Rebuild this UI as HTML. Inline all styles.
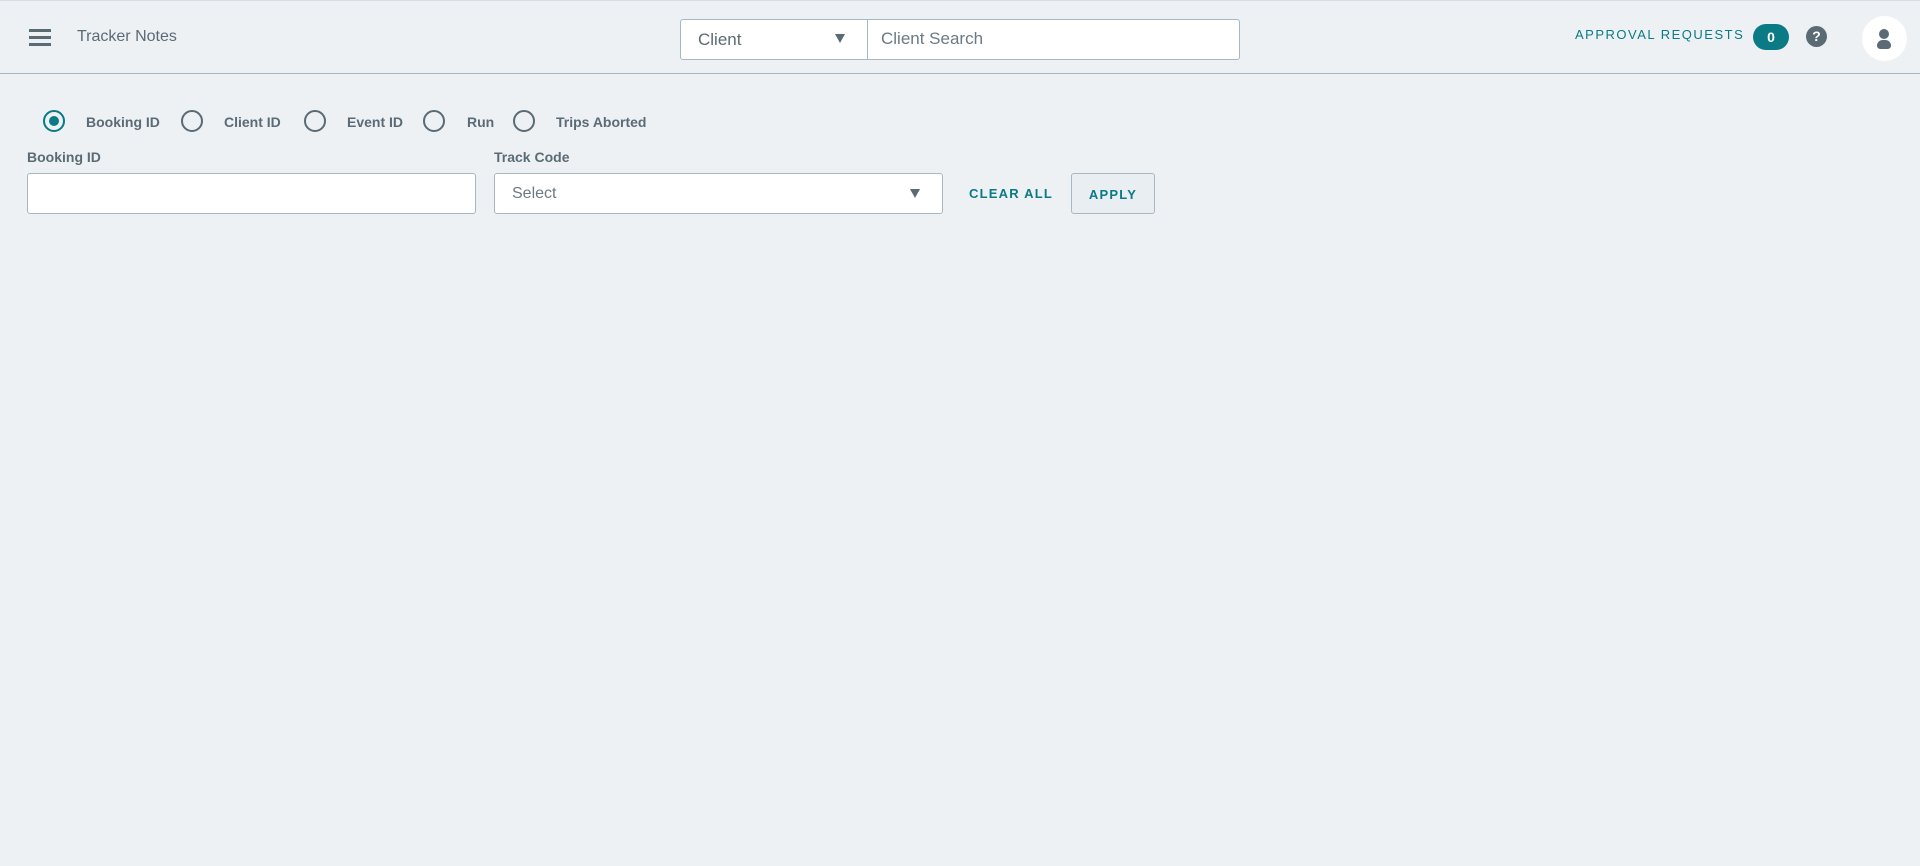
<!DOCTYPE html>
<html><head><meta charset="utf-8"><style>
*{box-sizing:border-box;margin:0;padding:0}
body{width:1920px;height:866px;background:#edf1f4;font-family:"Liberation Sans",sans-serif;color:#5b6b75;position:relative;overflow:hidden}
.a{position:absolute}
.hdr{left:0;top:0;width:1920px;height:74px;border-top:1px solid #d4dde3;border-bottom:1px solid #a8b8c3}
.box{background:#fff;border:1px solid #a8b8c3;border-radius:3px}
.rad{width:22px;height:22px;border:2px solid #5b6b75;border-radius:50%;top:110px}
.lbl{font-size:14px;font-weight:bold;top:114px}
.tri{width:0;height:0;border-left:5px solid transparent;border-right:5px solid transparent;border-top:9px solid #5b6b75}
</style></head><body>
<div class="a hdr"></div>
<div class="a" style="left:29px;top:29px;width:22px;height:3px;background:#5b6b75;box-shadow:0 7px 0 #5b6b75,0 14px 0 #5b6b75"></div>
<div class="a" style="left:77px;top:28px;font-size:16px">Tracker Notes</div>
<div class="a box" style="left:680px;top:19px;width:188px;height:41px;border-radius:3px 0 0 3px"></div>
<div class="a" style="left:698px;top:30px;font-size:17px">Client</div>
<div class="a tri" style="left:835px;top:34px"></div>
<div class="a box" style="left:867px;top:19px;width:373px;height:41px;border-radius:0 3px 3px 0"></div>
<div class="a" style="left:881px;top:29px;font-size:17px;color:#6b7a83">Client Search</div>
<div class="a" style="left:1575px;top:27px;font-size:13px;color:#0a7a84;letter-spacing:1.5px">APPROVAL REQUESTS</div>
<div class="a" style="left:1753px;top:24px;width:36px;height:26px;border-radius:13px;background:#0a7a84;color:#fff;font-size:14px;font-weight:bold;text-align:center;line-height:26px">0</div>
<div class="a" style="left:1806px;top:26px;width:21px;height:21px;border-radius:50%;background:#5b6b75;color:#fff;font-size:14px;font-weight:bold;text-align:center;line-height:21px">?</div>
<div class="a" style="left:1862px;top:16px;width:45px;height:45px;border-radius:50%;background:#fff"></div>
<div class="a" style="left:1879px;top:29px;width:10px;height:10px;border-radius:50%;background:#5b6b75"></div>
<div class="a" style="left:1877px;top:40px;width:14px;height:9px;border-radius:7px 7px 4px 4px;background:#5b6b75"></div>

<div class="a rad" style="left:43px;border-color:#0a7a84"><div style="width:10px;height:10px;border-radius:50%;background:#0a7a84;margin:4px"></div></div>
<div class="a lbl" style="left:86px">Booking ID</div>
<div class="a rad" style="left:181px"></div>
<div class="a lbl" style="left:224px">Client ID</div>
<div class="a rad" style="left:304px"></div>
<div class="a lbl" style="left:347px">Event ID</div>
<div class="a rad" style="left:423px"></div>
<div class="a lbl" style="left:467px">Run</div>
<div class="a rad" style="left:513px"></div>
<div class="a lbl" style="left:556px">Trips Aborted</div>

<div class="a" style="left:27px;top:149px;font-size:14px;font-weight:bold">Booking ID</div>
<div class="a" style="left:494px;top:149px;font-size:14px;font-weight:bold">Track Code</div>
<div class="a box" style="left:27px;top:173px;width:449px;height:41px"></div>
<div class="a box" style="left:494px;top:173px;width:449px;height:41px"></div>
<div class="a" style="left:512px;top:185px;font-size:16px;color:#6b7a83">Select</div>
<div class="a tri" style="left:910px;top:189px"></div>
<div class="a" style="left:969px;top:186px;font-size:13px;font-weight:bold;color:#0a7a84;letter-spacing:1.2px">CLEAR ALL</div>
<div class="a" style="left:1071px;top:173px;width:84px;height:41px;border:1px solid #a8b8c3;border-radius:3px;background:#e8eef2;color:#0a7a84;font-size:13px;font-weight:bold;letter-spacing:1.2px;text-align:center;line-height:41px">APPLY</div>
</body></html>
